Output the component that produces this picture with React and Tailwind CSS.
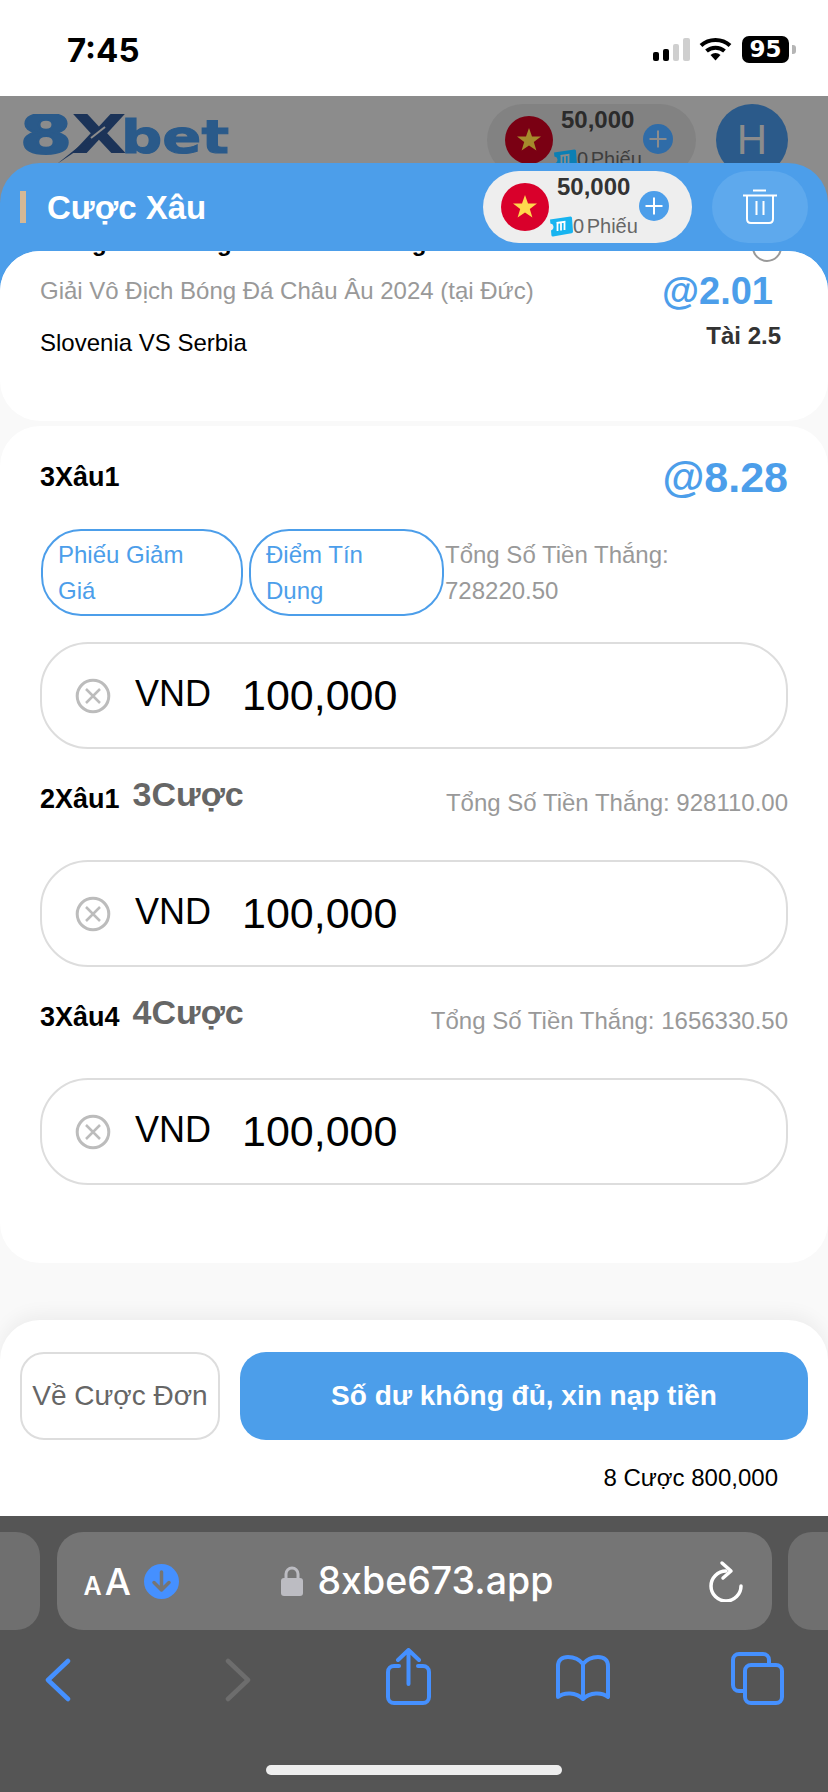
import React from "react";

function Flag({ bg, star }) {
  return (
    <svg width="48" height="48" viewBox="0 0 48 48" className="shrink-0">
      <circle cx="24" cy="24" r="24" fill={bg} />
      <polygon points="24,12 27,20.6 36,20.6 28.8,26 31.4,34.6 24,29.4 16.6,34.6 19.2,26 12,20.6 21,20.6" fill={star} />
    </svg>
  );
}

function Ticket({ bg, fg }) {
  return (
    <svg width="24" height="21" viewBox="0 0 24 21" className="shrink-0">
      <path d="M1 3.5 L21.5 0.5 Q23 0.4 23 2 L24 15.5 Q24 17 22.5 17.2 L4 20.5 Q2.6 20.6 2.4 19.2 L2 14.5 Q5 13 4.4 10 Q4 7.6 1.4 7.4 Z" fill={bg} />
      <path d="M8.5 7.5 V15 M12 7 V14.5 M15.5 6.5 V14 M7.5 7 L16.5 5.7" stroke={fg} strokeWidth="1.8" fill="none" />
    </svg>
  );
}

function BalancePill({ wrap, flagBg, flagStar, amount, label, tBg, tFg, plusBg, plusFg }) {
  return (
    <div className={`flex w-[209px] h-[72px] shrink-0 items-start rounded-[36px] pl-[18px] pt-[12px] ${wrap}`}>
      <Flag bg={flagBg} star={flagStar} />
      <div className="-mt-[12px] flex w-[90px] shrink-0 flex-col">
        <div className={`pl-[8px] pt-[2px] text-[24px] leading-[28px] font-bold ${amount}`}>50,000</div>
        <div className="mt-[13px] flex h-[24px] items-center whitespace-nowrap">
          <Ticket bg={tBg} fg={tFg} />
          <span className={`text-[20px] leading-[24px] [word-spacing:-3px] ${label}`}>0 Phiếu</span>
        </div>
      </div>
      <svg width="30" height="30" viewBox="0 0 30 30" className="mt-[8px] shrink-0">
        <circle cx="15" cy="15" r="15" fill={plusBg} />
        <path d="M15 6.5 V23.5 M6.5 15 H23.5" stroke={plusFg} strokeWidth="2" />
      </svg>
    </div>
  );
}

function StatusBar() {
  return (
    <div className="flex h-[96px] shrink-0 items-start bg-white pl-[67px]">
      <div className="mt-[30px] font-['Inter',sans-serif] text-[33px] leading-[40px] font-bold text-black">7:45</div>
      <div className="ml-auto mt-[38px] flex h-[23px] items-end gap-[4px]">
        <div className="h-[9px] w-[6px] rounded-[2px] bg-black" />
        <div className="h-[12px] w-[6px] rounded-[2px] bg-black" />
        <div className="h-[17px] w-[6px] rounded-[2px] bg-[#cfcfcf]" />
        <div className="h-[23px] w-[7px] rounded-[2px] bg-[#cfcfcf]" />
      </div>
      <svg width="33" height="24" viewBox="0 0 33 24" className="ml-[9px] mt-[37px]">
        <path d="M2 8.5 C10 1 23 1 31 8.5" stroke="#000" strokeWidth="4" fill="none" />
        <path d="M7.5 14 C12.5 9.5 20.5 9.5 25.5 14" stroke="#000" strokeWidth="4" fill="none" />
        <path d="M11.5 18 C14.5 15.2 18.5 15.2 21.5 18 L16.5 23.5 Z" fill="#000" />
      </svg>
      <div className="ml-[10px] mt-[36px] flex h-[27px] w-[47px] items-center justify-center rounded-[7px] bg-black font-['DejaVu_Sans',sans-serif] text-[23px] leading-[27px] font-bold text-white">95</div>
      <div className="ml-[3px] mr-[32px] mt-[45px] h-[9px] w-[4px] rounded-r-[3px] bg-[#b5b5b5]" />
    </div>
  );
}

function Logo() {
  return (
    <svg width="212" height="60" viewBox="0 0 212 60" className="mt-[10px] shrink-0">
      <text x="-3" y="39" fontFamily="'DejaVu Sans',sans-serif" fontWeight="700" fontSize="54" fill="#2a5a8a" stroke="#2a5a8a" strokeWidth="2" textLength="52" lengthAdjust="spacingAndGlyphs">8</text>
      <text x="48" y="39" fontFamily="'DejaVu Sans',sans-serif" fontWeight="700" fontSize="54" fill="#1b3358" textLength="56" lengthAdjust="spacingAndGlyphs">X</text>
      <path d="M34 50 L70 21 L74 23 Z" fill="#1b3358" />
      <path d="M68 24 L82 13" stroke="#8c8c8c" strokeWidth="2" />
      <text x="98" y="39" fontFamily="'DejaVu Sans',sans-serif" fontWeight="700" fontSize="46" fill="#2a5a8a" stroke="#2a5a8a" strokeWidth="1" textLength="108" lengthAdjust="spacingAndGlyphs">bet</text>
    </svg>
  );
}

function TopNav() {
  return (
    <div className="flex h-[67px] shrink-0 items-start overflow-hidden pl-[23px] pt-[8px] pr-[40px]">
      <div className="-mt-[8px] flex h-[67px] items-start overflow-hidden">
        <div className="mt-[8px]"><Logo /></div>
      </div>
      <div className="ml-auto">
        <BalancePill
          wrap="bg-[#828282]"
          flagBg="#7a0013"
          flagStar="#a58a2c"
          amount="text-[#2b2b2b]"
          label="text-[#3e3e3e]"
          tBg="#0b7fb4"
          tFg="#8c8c8c"
          plusBg="#2f6ca8"
          plusFg="#8c8c8c"
        />
      </div>
      <div className="ml-[20px] flex h-[72px] w-[72px] shrink-0 items-center justify-center rounded-full bg-[#2b5a8a] text-[42px] leading-[48px] text-[#8c8c8c]">H</div>
    </div>
  );
}

function SheetHeader() {
  return (
    <div className="flex h-[88px] shrink-0 items-center rounded-t-[40px] bg-[#4c9eea] pl-[20px]">
      <div className="h-[32px] w-[6px] bg-[#d4b896]" />
      <div className="ml-[21px] mt-[2px] text-[33px] leading-[40px] font-bold text-white">Cược Xâu</div>
      <div className="ml-auto">
        <BalancePill
          wrap="bg-[#eeeeee]"
          flagBg="#d9002b"
          flagStar="#ffd84d"
          amount="text-[#333333]"
          label="text-[#666666]"
          tBg="#17b4f0"
          tFg="#ffffff"
          plusBg="#4c9eea"
          plusFg="#ffffff"
        />
      </div>
      <div className="ml-[20px] mr-[20px] flex h-[72px] w-[96px] items-center justify-center rounded-[36px] bg-[#5ea9ed]">
        <svg width="36" height="36" viewBox="0 0 36 36" fill="none" stroke="#fff" strokeWidth="2">
          <path d="M1 6.5 H35" />
          <path d="M11 1.5 H24" />
          <path d="M5 7 V30 Q5 34 9 34 H27 Q31 34 31 30 V7" />
          <path d="M14.5 12 V26 M21.5 12 V26" />
        </svg>
      </div>
    </div>
  );
}

function MatchCard() {
  return (
    <div className="h-[170px] shrink-0 overflow-hidden rounded-[40px] bg-white">
      <div className="-mt-[23px] flex h-[30px] justify-between pl-[40px] pr-[46px]">
        <div className="flex text-[24px] leading-[30px] font-bold whitespace-nowrap text-black">
          <span className="w-[68px]">Trong</span>
          <span className="ml-[109px]">g</span>
          <span className="ml-[180px]">g</span>
        </div>
        <div className="mt-[4px] h-[30px] w-[30px] shrink-0 rounded-full border-2 border-[#999999]" />
      </div>
      <div className="mt-[11px] flex h-[44px] items-center justify-between pl-[40px] pr-[55px]">
        <div className="text-[24px] leading-[30px] text-[#999999]">Giải Vô Địch Bóng Đá Châu Âu 2024 (tại Đức)</div>
        <div className="text-[38px] leading-[44px] font-bold text-[#4c9eea]">@2.01</div>
      </div>
      <div className="mt-[9px] flex items-start justify-between pl-[40px] pr-[47px]">
        <div className="mt-[7px] text-[24px] leading-[28px] text-black">Slovenia VS Serbia</div>
        <div className="text-[24px] leading-[28px] font-bold text-[#333333]">Tài 2.5</div>
      </div>
    </div>
  );
}

function StakeInput() {
  return (
    <div className="flex h-[107px] shrink-0 items-center rounded-[48px] border-2 border-[#dddddd] bg-white pl-[33px]">
      <svg width="36" height="36" viewBox="0 0 36 36" fill="none" stroke="#bcbcbc" className="shrink-0">
        <circle cx="18" cy="18" r="15.8" strokeWidth="3" />
        <path d="M11 11 L25 25 M25 11 L11 25" strokeWidth="2.5" />
      </svg>
      <span className="mb-[4px] ml-[24px] text-[36px] leading-[44px] text-black">VND</span>
      <span className="mb-[2px] ml-[31px] text-[43px] leading-[50px] text-black">100,000</span>
    </div>
  );
}

function LabelRow({ name, count, win }) {
  return (
    <div className="flex h-[111px] shrink-0 items-start justify-between">
      <div className="mt-[27px] flex items-baseline gap-[13px] leading-[40px]">
        <span className="text-[27px] font-bold text-black">{name}</span>
        <span className="-translate-y-[2px] text-[34px] font-bold text-[#666666]">{count}</span>
      </div>
      <div className="mt-[40px] text-[24px] leading-[28px] text-[#999999]">{win}</div>
    </div>
  );
}

function ComboCard() {
  return (
    <div className="mt-[5px] flex h-[837px] shrink-0 flex-col rounded-[40px] bg-white px-[40px] pt-[26px]">
      <div className="flex h-[50px] items-center justify-between">
        <span className="text-[27px] leading-[40px] font-bold text-black">3Xâu1</span>
        <span className="text-[43px] leading-[50px] font-bold text-[#4c9eea]">@8.28</span>
      </div>
      <div className="mt-[27px] flex h-[87px] items-center">
        <div className="ml-[1px] flex h-[87px] w-[202px] shrink-0 items-center rounded-[40px] border-2 border-[#4c9eea] pl-[15px] text-[24px] leading-[36px] text-[#4c9eea]">Phiếu Giảm<br />Giá</div>
        <div className="ml-[6px] flex h-[87px] w-[195px] shrink-0 items-center rounded-[40px] border-2 border-[#4c9eea] pl-[15px] text-[24px] leading-[36px] text-[#4c9eea]">Điểm Tín<br />Dụng</div>
        <div className="ml-[1px] text-[24px] leading-[36px] text-[#999999]">Tổng Số Tiền Thắng:<br />728220.50</div>
      </div>
      <div className="mt-[26px]"><StakeInput /></div>
      <LabelRow name="2Xâu1" count="3Cược" win="Tổng Số Tiền Thắng: 928110.00" />
      <StakeInput />
      <LabelRow name="3Xâu4" count="4Cược" win="Tổng Số Tiền Thắng: 1656330.50" />
      <StakeInput />
    </div>
  );
}

function Footer() {
  return (
    <div className="mt-[57px] h-[196px] shrink-0 rounded-t-[40px] bg-white pt-[32px] shadow-[0_-6px_18px_rgba(0,0,0,0.05)]">
      <div className="flex pl-[20px] pr-[20px]">
        <div className="flex h-[88px] w-[200px] items-center justify-center rounded-[24px] border-2 border-[#dddddd] text-[28px] whitespace-nowrap text-[#666666]">Về Cược Đơn</div>
        <div className="ml-[20px] flex h-[88px] flex-1 items-center justify-center rounded-[26px] bg-[#4c9eea] text-[28px] font-bold text-white">Số dư không đủ, xin nạp tiền</div>
      </div>
      <div className="mt-[24px] pr-[50px] text-right text-[24px] leading-[28px] text-black">8 Cược 800,000</div>
    </div>
  );
}

function BrowserBar() {
  return (
    <div className="h-[276px] shrink-0 bg-[#555555] pt-[16px]">
      <div className="flex h-[98px] items-stretch justify-between">
        <div className="w-[40px] rounded-r-[24px] bg-[#6f6f6f]" />
        <div className="flex w-[715px] items-center rounded-[26px] bg-[#757575] pl-[27px] pr-[28px]">
          <div className="mt-[5px] flex w-[50px] items-baseline font-['Inter',sans-serif] font-semibold text-white">
            <span className="text-[25px] leading-[40px]">A</span>
            <span className="ml-[3px] text-[37px] leading-[40px] font-medium">A</span>
          </div>
          <svg width="35" height="35" viewBox="0 0 35 35" className="ml-[10px] shrink-0">
            <circle cx="17.5" cy="17.5" r="17.5" fill="#4590ff" />
            <path d="M17.5 8 V26 M10 18.5 L17.5 26 L25 18.5" stroke="#757575" strokeWidth="3.5" strokeLinecap="round" strokeLinejoin="round" fill="none" />
          </svg>
          <svg width="22" height="30" viewBox="0 0 22 30" className="ml-[102px] shrink-0">
            <path d="M5 13 V8 a6 6 0 0 1 12 0 V13" stroke="#bcbcc2" strokeWidth="3" fill="none" />
            <rect x="0" y="12" width="22" height="18" rx="3" fill="#bcbcc2" />
          </svg>
          <span className="ml-[15px] font-['Inter',sans-serif] text-[37.5px] leading-[44px] font-medium text-white">8xbe673.app</span>
          <svg width="36" height="42" viewBox="0 0 36 42" className="ml-auto shrink-0" fill="none" stroke="#fff" strokeWidth="3.5" strokeLinecap="round" strokeLinejoin="round">
            <path d="M18 11 A15 15 0 1 0 33 26" />
            <path d="M14 3 L23 11 L15 18" />
          </svg>
        </div>
        <div className="w-[40px] rounded-l-[24px] bg-[#6f6f6f]" />
      </div>
      <div className="mt-[18px] flex items-start pl-[45px]">
        <svg width="26" height="44" viewBox="0 0 26 44" fill="none" stroke="#4590ff" strokeWidth="4.5" strokeLinecap="round" strokeLinejoin="round" className="mt-[10px] shrink-0">
          <path d="M23 3 L3 22 L23 41" />
        </svg>
        <svg width="26" height="44" viewBox="0 0 26 44" fill="none" stroke="#6d6d6d" strokeWidth="4.5" strokeLinecap="round" strokeLinejoin="round" className="ml-[154px] mt-[10px] shrink-0">
          <path d="M3 3 L23 22 L3 41" />
        </svg>
        <svg width="45" height="57" viewBox="0 0 45 57" fill="none" stroke="#4590ff" strokeWidth="4" strokeLinecap="round" strokeLinejoin="round" className="ml-[135px] shrink-0">
          <path d="M13 18 H8 a6 6 0 0 0 -6 6 V49 a6 6 0 0 0 6 6 H37 a6 6 0 0 0 6 -6 V24 a6 6 0 0 0 -6 -6 H32" />
          <path d="M22.5 3 V36 M12 12 L22.5 2 L33 12" />
        </svg>
        <svg width="56" height="47" viewBox="0 0 56 47" fill="none" stroke="#4590ff" strokeWidth="4" strokeLinecap="round" strokeLinejoin="round" className="ml-[124px] mt-[7px] shrink-0">
          <path d="M28 9 C24 4 18 2 13 2 C7 2 3 5 3 11 V42 C9 37 21 37 28 44 C35 37 47 37 53 42 V11 C53 5 49 2 43 2 C38 2 32 4 28 9 Z" />
          <path d="M28 9 V43" />
        </svg>
        <svg width="54" height="53" viewBox="0 0 54 53" fill="none" stroke="#4590ff" strokeWidth="4" strokeLinecap="round" strokeLinejoin="round" className="ml-[119px] mt-[4px] shrink-0">
          <path d="M39 13 V8 a6 6 0 0 0 -6 -6 H9 a6 6 0 0 0 -6 6 V33 a6 6 0 0 0 6 6 H14" />
          <rect x="15" y="13" width="37" height="38" rx="6" />
        </svg>
      </div>
      <div className="ml-[266px] mt-[60px] h-[10px] w-[296px] rounded-full bg-[#eeeeee]" />
    </div>
  );
}

export default function App() {
  return (
    <div className="flex h-[1792px] w-[828px] flex-col overflow-hidden bg-white font-['Liberation_Sans',sans-serif]">
      <StatusBar />
      <div className="flex flex-1 flex-col bg-[#8c8c8c]">
        <TopNav />
        <SheetHeader />
        <div className="flex-1 bg-[#4c9eea]">
          <div className="flex h-full flex-col rounded-t-[40px] bg-[#f9f9f9]">
            <MatchCard />
            <ComboCard />
            <Footer />
          </div>
        </div>
      </div>
      <BrowserBar />
    </div>
  );
}
